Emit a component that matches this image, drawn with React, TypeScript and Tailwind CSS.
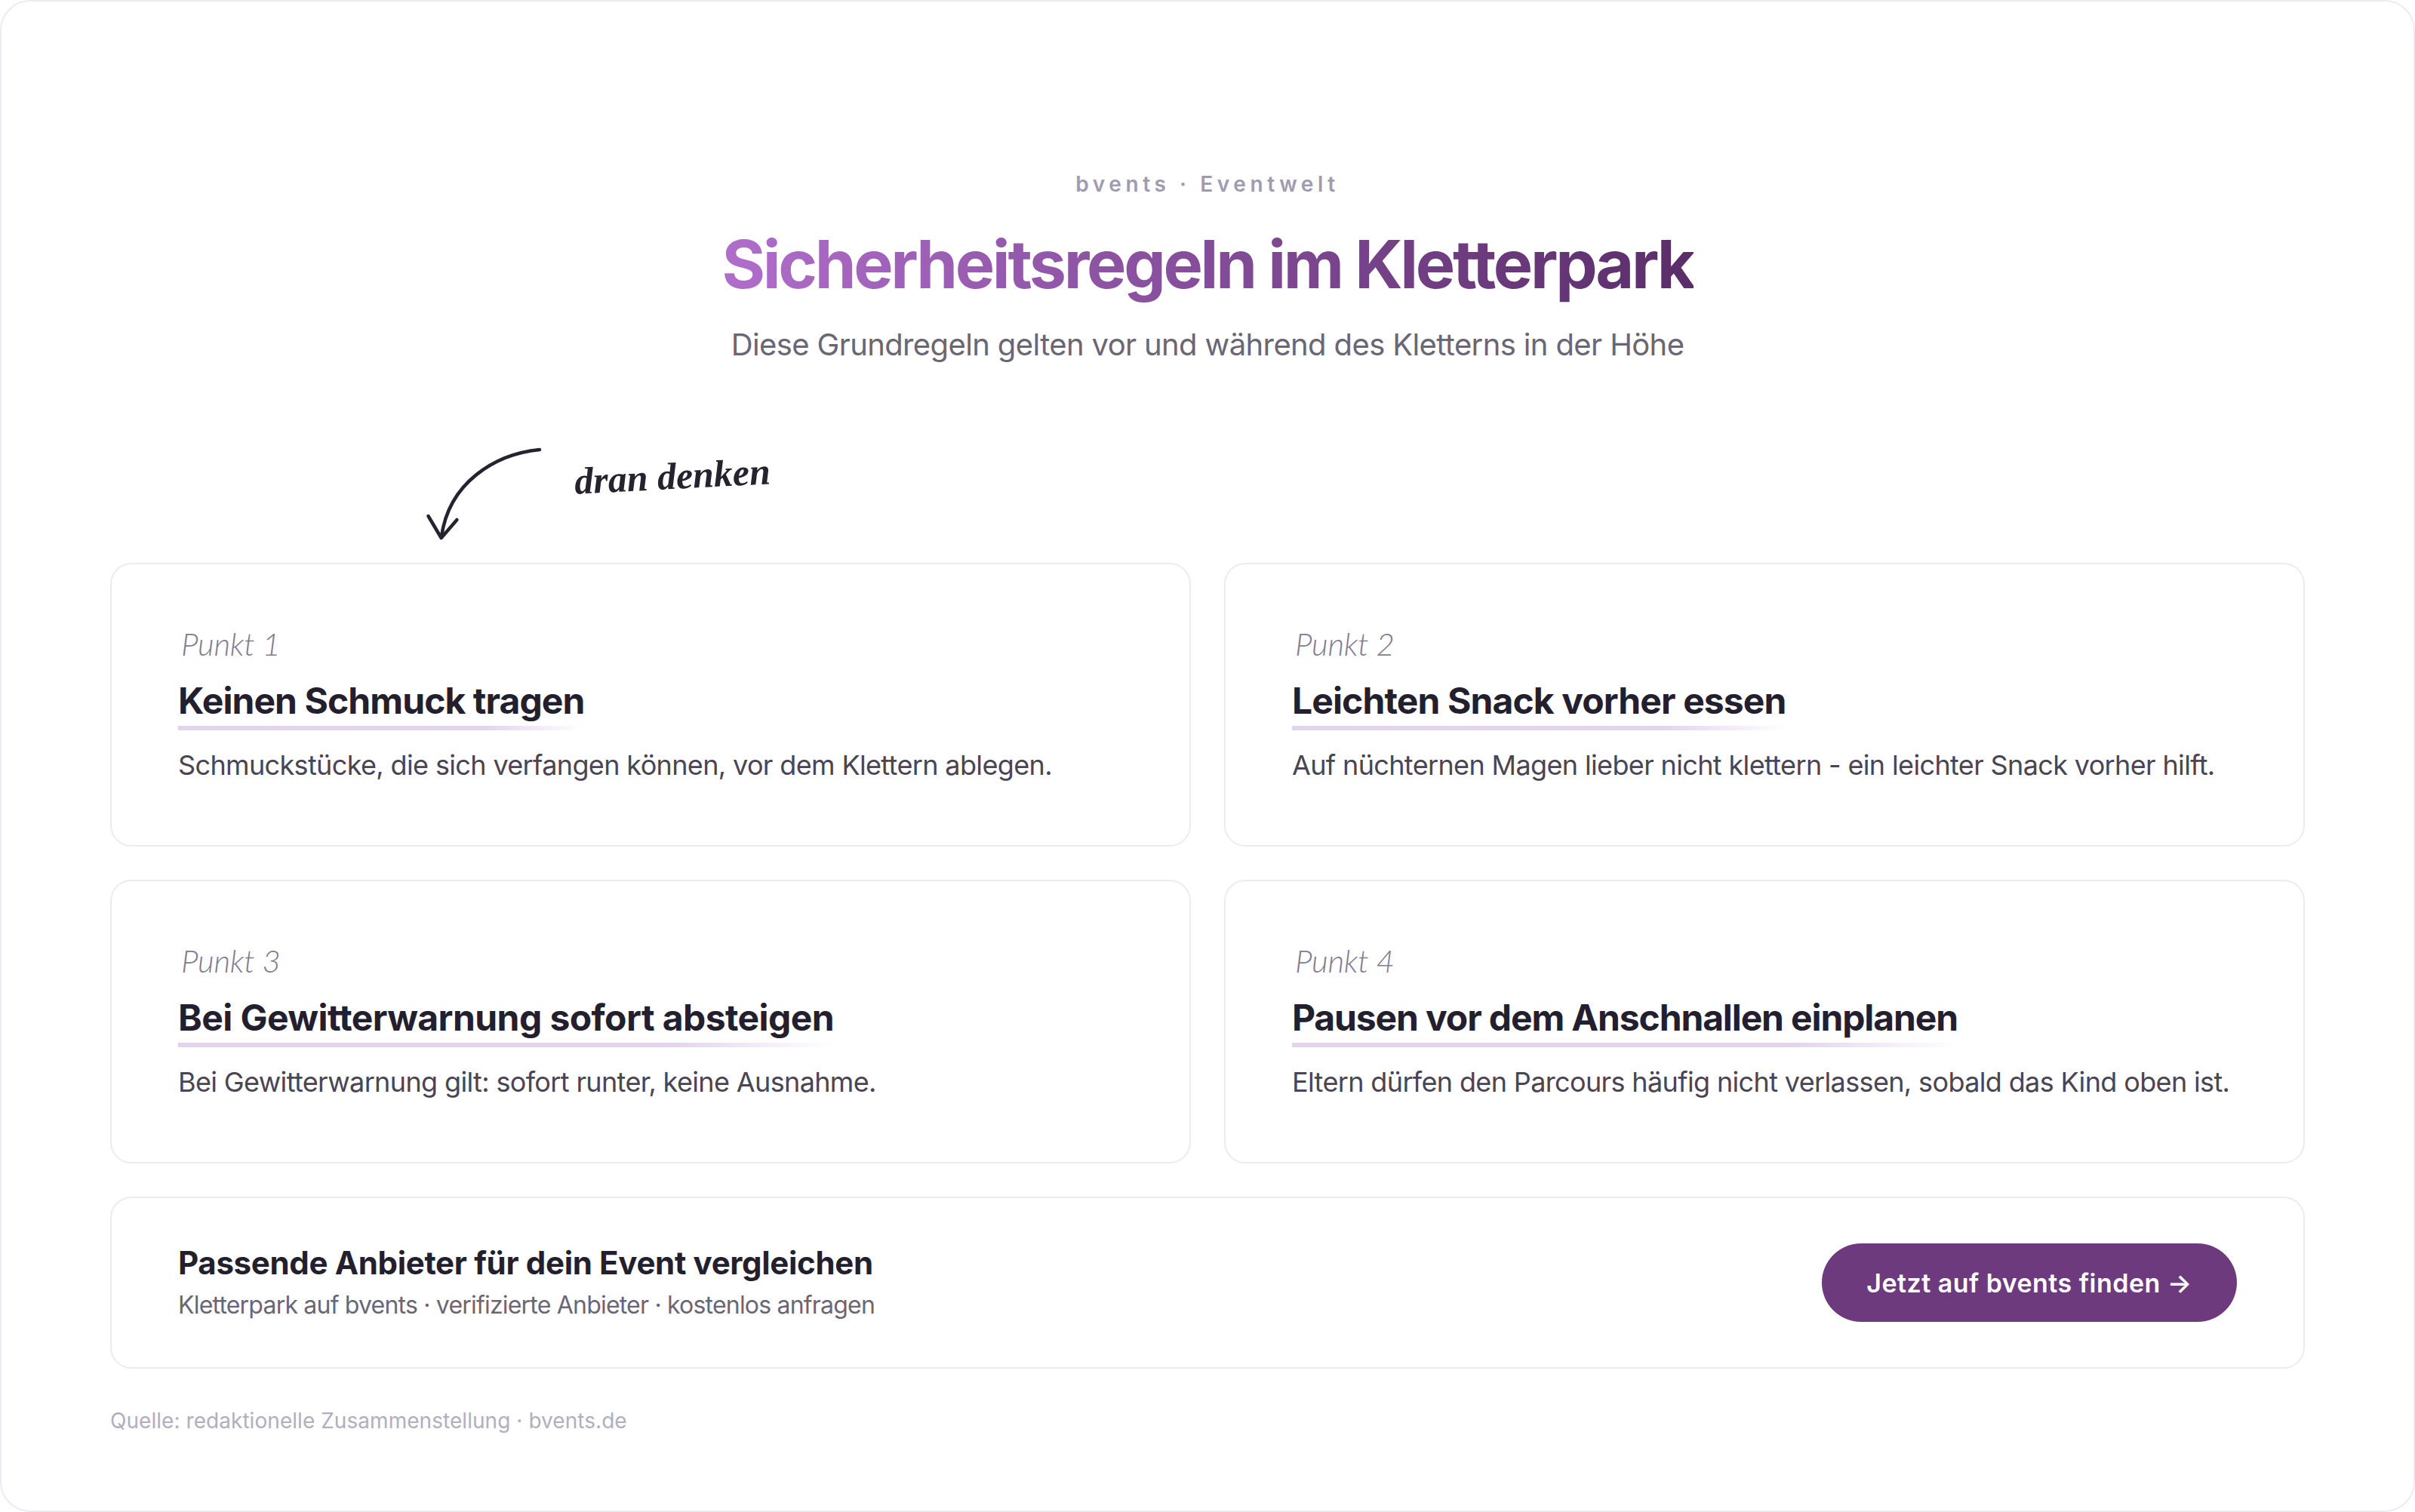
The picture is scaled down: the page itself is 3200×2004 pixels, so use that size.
const rules = [
  {
    label: "Punkt 1",
    title: "Keinen Schmuck tragen",
    titleClass: "tracking-[-0.92px]",
    text: "Schmuckstücke, die sich verfangen können, vor dem Klettern ablegen.",
  },
  {
    label: "Punkt 2",
    title: "Leichten Snack vorher essen",
    titleClass: "tracking-[-0.88px]",
    text: "Auf nüchternen Magen lieber nicht klettern - ein leichter Snack vorher hilft.",
  },
  {
    label: "Punkt 3",
    title: "Bei Gewitterwarnung sofort absteigen",
    titleClass: "tracking-[-0.57px]",
    text: "Bei Gewitterwarnung gilt: sofort runter, keine Ausnahme.",
  },
  {
    label: "Punkt 4",
    title: "Pausen vor dem Anschnallen einplanen",
    titleClass: "tracking-[-1.13px]",
    text: "Eltern dürfen den Parcours häufig nicht verlassen, sobald das Kind oben ist.",
  },
]

export default function App() {
  return (
    <div className="h-[2004px] w-[3200px] overflow-hidden rounded-[40px] border-2 border-[#ecebf4] bg-white px-[144px] pt-[225px] [font-family:Inter,sans-serif]">
      {/* Header */}
      <div className="flex flex-col items-center">
        <p className="text-[28px] leading-[34px] font-semibold tracking-[5.6px] text-[#a09bb0]">bvents · Eventwelt</p>
        <h1 className="mt-[37px] bg-gradient-to-r from-[#b06ecb] to-[#5a2d69] bg-clip-text text-[88px] leading-[104px] font-bold tracking-[-3.3px] text-transparent">
          Sicherheitsregeln im Kletterpark
        </h1>
        <p className="mt-[31px] text-[40px] leading-[48px] tracking-[-0.62px] text-[#6b6674]">
          Diese Grundregeln gelten vor und während des Kletterns in der Höhe
        </p>
      </div>

      {/* Handwritten note */}
      <div className="flex h-[265px] items-start pt-[109px] pl-[414px]">
        <svg width="160" height="130" viewBox="0 0 160 130" fill="none" stroke="#26222e" strokeWidth="4.5" strokeLinecap="round" strokeLinejoin="round">
          <path d="M155 6C95 12 35 50 25 121" />
          <path d="M7.5 94L24.7 123L45.4 99" />
        </svg>
        <span className="mt-[11px] ml-[41px] -rotate-3 text-[50px] leading-[60px] font-bold text-[#26222e] italic [font-family:'Liberation_Serif',serif]">
          dran denken
        </span>
      </div>

      {/* Rule cards */}
      <div className="grid grid-cols-2 gap-[44px]">
        {rules.map((rule) => (
          <div key={rule.label} className="h-[376px] rounded-[28px] border-2 border-[#ecebf4] bg-white px-[88px] pt-[83px]">
            <p className="pl-[4px] text-[42px] leading-[44px] font-light tracking-[-0.3px] text-[#837b90] italic [font-family:Lato,sans-serif]">{rule.label}</p>
            <div className="mt-[26px] w-fit">
              <h3 className={`text-[48px] leading-[56px] font-bold text-[#241f2e] ${rule.titleClass}`}>{rule.title}</h3>
              <div className="mt-[5px] h-[6px] bg-gradient-to-r from-[#e3d3ee] from-75% to-transparent" />
            </div>
            <p className="mt-[22px] text-[36px] leading-[48px] tracking-[-0.64px] text-[#4a4453]">{rule.text}</p>
          </div>
        ))}
      </div>

      {/* CTA */}
      <div className="mt-[44px] flex h-[228px] items-center justify-between rounded-[28px] border-2 border-[#ecebf4] bg-white px-[88px]">
        <div className="-mt-[2px]">
          <p className="text-[42px] leading-[52px] font-bold tracking-[-0.33px] text-[#241f2e]">Passende Anbieter für dein Event vergleichen</p>
          <p className="mt-[9px] text-[32px] leading-[42px] tracking-[-0.8px] text-[#6b6674]">
            Kletterpark auf bvents · verifizierte Anbieter · kostenlos anfragen
          </p>
        </div>
        <div className="flex h-[104px] w-[550px] items-center justify-center rounded-full bg-[#6d3b7d] text-[34px] font-semibold tracking-[0.46px] text-white">
          Jetzt auf bvents finden →
        </div>
      </div>

      <p className="mt-[51px] text-[28px] leading-[36px] tracking-[0.05px] text-[#b3aebd]">
        Quelle: redaktionelle Zusammenstellung · bvents.de
      </p>
    </div>
  )
}
